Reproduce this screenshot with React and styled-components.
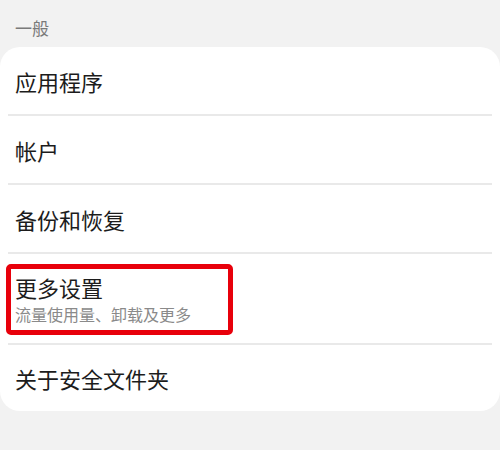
import React from "react";
import styled, { createGlobalStyle } from "styled-components";

const GlobalStyle = createGlobalStyle`
    html, body {
        margin: 0;
        padding: 0;
        background: #f2f2f2;
        font-family: "Noto Sans CJK SC", "Noto Sans", sans-serif;
    }
`

const Page = styled.div`
    width: 500px;
    height: 450px;
    background: #f2f2f2;
    overflow: hidden;
`

const SectionTitle = styled.div`
    padding: 18px 15px 9px;
    font-size: 17px;
    line-height: 20px;
    color: #7a7a7a;
`

const Card = styled.div`
    background: #ffffff;
    border-radius: 20px;
    display: flex;
    flex-direction: column;
`

const Item = styled.div`
    position: relative;
    display: flex;
    flex-direction: column;
    justify-content: center;
    padding: 0 15px;
    height: ${props => props.height}px;
`

const ItemTitle = styled.div`
    font-size: 22px;
    line-height: 26px;
    color: #1c1c1c;
`

const ItemSub = styled.div`
    margin-top: 4px;
    font-size: 16px;
    line-height: 20px;
    color: #8a8a8a;
`

const Divider = styled.div`
    height: 2px;
    margin: 0 8px;
    background: #e9e9e9;
`

const Highlight = styled.div`
    position: absolute;
    left: 6px;
    top: 10px;
    width: 217px;
    height: 61px;
    border: 5px solid #e8000b;
    border-radius: 5px;
    pointer-events: none;
`

const items = [
    { title: "应用程序", height: 67 },
    { title: "帐户", height: 67 },
    { title: "备份和恢复", height: 67 },
    { title: "更多设置", sub: "流量使用量、卸载及更多", height: 89, marked: true },
    { title: "关于安全文件夹", height: 66 },
]

export default function App() {
    return (
        <>
            <GlobalStyle />
            <Page>
                <SectionTitle>一般</SectionTitle>
                <Card>
                    {items.map((item, i) => (
                        <React.Fragment key={item.title}>
                            {i > 0 && <Divider />}
                            <Item height={item.height}>
                                <ItemTitle>{item.title}</ItemTitle>
                                {item.sub && <ItemSub>{item.sub}</ItemSub>}
                                {item.marked && <Highlight />}
                            </Item>
                        </React.Fragment>
                    ))}
                </Card>
            </Page>
        </>
    )
}
